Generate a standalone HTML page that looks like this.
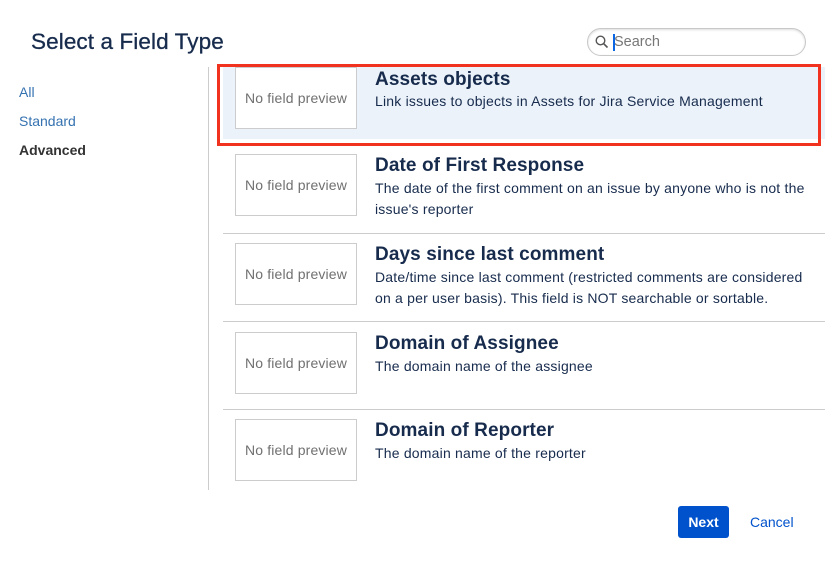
<!DOCTYPE html>
<html><head><style>
*{margin:0;padding:0;box-sizing:border-box}
body{width:837px;height:579px;background:#fff;font-family:"Liberation Sans",sans-serif;position:relative;overflow:hidden;color:#172b4d}
.abs{position:absolute}
h1{position:absolute;left:31px;top:29px;font-size:22.5px;font-weight:normal;color:#172b4d;letter-spacing:0.1px;-webkit-text-stroke:0.3px #172b4d}
.nav{position:absolute;left:19px;font-size:14px;color:#3572b0}
.vline{position:absolute;left:208px;top:67px;width:1px;height:423px;background:#ccc}
.row{position:absolute;left:223px;width:602px;height:88px;border-bottom:1px solid #ccc}
.box{position:absolute;left:12px;width:122px;height:62px;border:1px solid #ccc;background:#fff;font-size:14px;color:#707070;text-align:center;line-height:60px;letter-spacing:0.15px}
.t{position:absolute;left:152px;top:1px;font-size:19px;font-weight:bold;color:#172b4d;letter-spacing:0.1px}
.d{position:absolute;left:152px;font-size:14px;line-height:21px;color:#172b4d;width:445px;letter-spacing:0.2px}
</style></head><body>
<h1>Select a Field Type</h1>
<div class="abs" style="left:587px;top:28px;width:219px;height:28px;border:1px solid #c8c8c8;border-radius:14px;box-shadow:inset 0 1px 2px #ddd"></div>
<svg class="abs" style="left:595px;top:35px" width="14" height="14" viewBox="0 0 14 14"><circle cx="5.5" cy="5.5" r="4.3" fill="none" stroke="#555" stroke-width="1.4"/><line x1="8.7" y1="8.7" x2="12.5" y2="12.5" stroke="#555" stroke-width="1.6"/></svg>
<div class="abs" style="left:613px;top:34px;width:1.5px;height:17px;background:#0a66e4"></div>
<div class="abs" style="left:614px;top:34px;font-size:14.5px;color:#777">Search</div>
<div class="nav" style="top:84px">All</div>
<div class="nav" style="top:113px">Standard</div>
<div class="nav" style="top:142px;color:#333;font-weight:bold">Advanced</div>
<div class="vline"></div>
<div class="row" style="top:67px;height:72px;background:#ebf2f9;border:none">
 <div class="box" style="top:0">No field preview</div>
 <div class="t" style="top:2px">Assets objects</div>
 <div class="d" style="top:24px">Link issues to objects in Assets for Jira Service Management</div>
</div>
<div class="abs" style="left:217px;top:64px;width:604px;height:82px;border:3px solid #f0321e"></div>
<div class="row" style="top:146px">
 <div class="box" style="top:8px">No field preview</div>
 <div class="t" style="top:9px">Date of First Response</div>
 <div class="d" style="top:32px">The date of the first comment on an issue by anyone who is not the issue's reporter</div>
</div>
<div class="row" style="top:234px">
 <div class="box" style="top:9px">No field preview</div>
 <div class="t" style="top:10px">Days since last comment</div>
 <div class="d" style="top:33px">Date/time since last comment (restricted comments are considered on a per user basis). This field is NOT searchable or sortable.</div>
</div>
<div class="row" style="top:322px">
 <div class="box" style="top:10px">No field preview</div>
 <div class="t" style="top:11px">Domain of Assignee</div>
 <div class="d" style="top:34px">The domain name of the assignee</div>
</div>
<div class="row" style="top:409px;border:none">
 <div class="box" style="top:10px">No field preview</div>
 <div class="t" style="top:11px">Domain of Reporter</div>
 <div class="d" style="top:34px">The domain name of the reporter</div>
</div>
<div class="abs" style="left:678px;top:506px;width:51px;height:32px;background:#0052cc;border-radius:3px;color:#fff;font-weight:bold;font-size:14px;text-align:center;line-height:32px">Next</div>
<div class="abs" style="left:750px;top:514px;font-size:14px;color:#0052cc">Cancel</div>
</body></html>
